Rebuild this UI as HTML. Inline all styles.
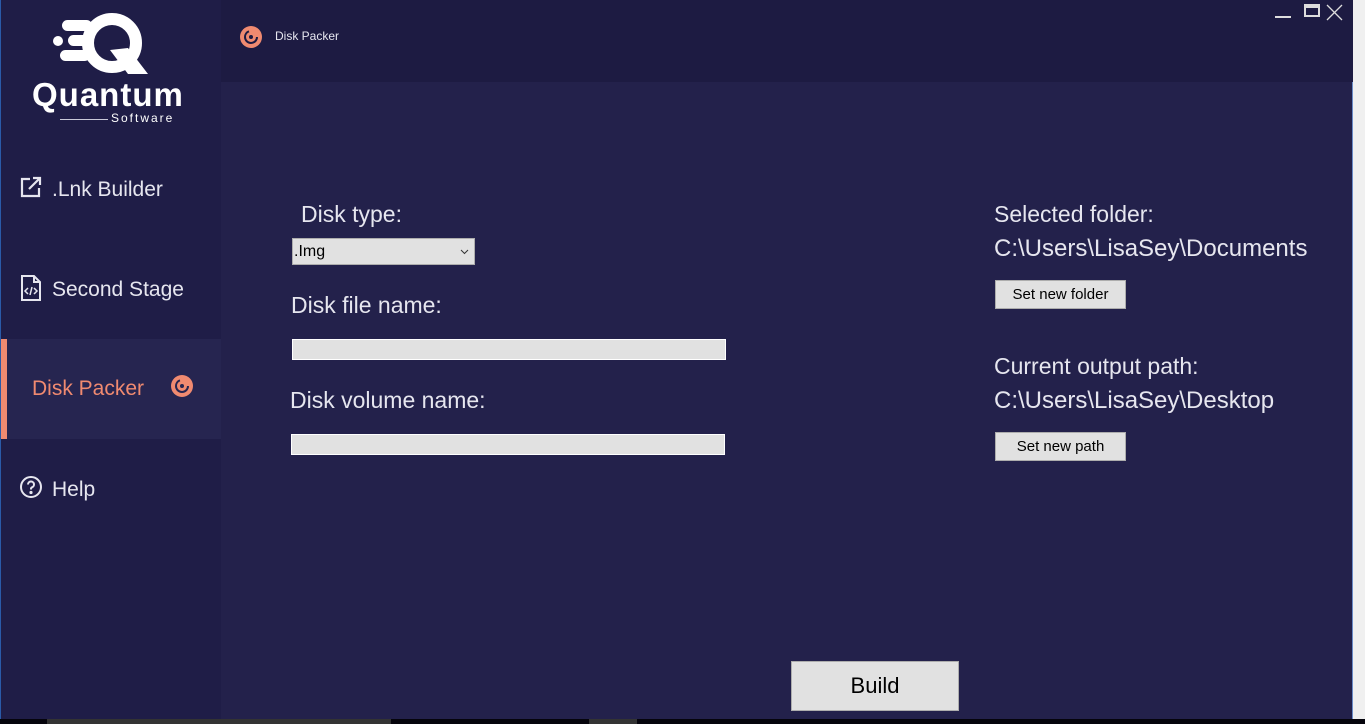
<!DOCTYPE html>
<html><head><style>
*{margin:0;padding:0;box-sizing:border-box}
body{width:1365px;height:724px;overflow:hidden;background:#f0f0f0;font-family:"Liberation Sans",Arial,sans-serif;position:relative}
#win{position:absolute;left:0;top:0;width:1353px;height:719px;background:#23214b;border-left:1px solid #2a5aa8;border-right:1px solid #6a8cc8}
#side{position:absolute;left:0;top:0;width:220px;height:719px;background:#1f1d47}
#hdr{position:absolute;left:220px;top:0;width:1132px;height:82px;background:#1d1b42}
.t{position:absolute;color:#e6e6ef;white-space:nowrap}
.nav{position:absolute;left:0;width:220px;height:100px;color:#e6e6ef;font-size:21px}
.nav span{position:absolute;left:51px;top:38px}
.box{position:absolute;background:#e1e1e1;border:1px solid #adadad}
.btn{position:absolute;background:#e1e1e1;border:1px solid #adadad;color:#000;font-size:15px;text-align:center}
#bottom{position:absolute;left:0;top:719px;width:1365px;height:5px;background:#05040c}
</style></head><body>
<div id="win">
<div id="side">
 <svg style="position:absolute;left:47px;top:10px" width="110" height="68" viewBox="0 0 110 68">
  <circle cx="10" cy="31" r="5" fill="#fff"/>
  <rect x="14" y="10" width="30" height="11" rx="5.5" fill="#fff"/>
  <rect x="20" y="25" width="22" height="11" rx="5.5" fill="#fff"/>
  <rect x="12" y="40" width="30" height="11" rx="5.5" fill="#fff"/>
  <circle cx="64" cy="33" r="24" fill="none" stroke="#fff" stroke-width="12"/>
  <path d="M62 40 L80 64 L100 64 L80 38 Z" fill="#fff"/>
 </svg>
 <div class="t" style="left:31px;top:76px;font-size:33px;font-weight:bold;color:#fff;letter-spacing:1px">Quantum</div>
 <div style="position:absolute;left:59px;top:119px;width:48px;height:1px;background:#c8c8d8"></div>
 <div class="t" style="left:110px;top:111px;font-size:12px;color:#fff;letter-spacing:2px">Software</div>
 <div class="nav" style="top:140px"><svg style="position:absolute;left:18px;top:35px" width="24" height="24" viewBox="0 0 24 24" fill="none" stroke="#e6e6ef" stroke-width="2.2"><path d="M11 4H3v17h17v-8"/><path d="M10 14L21 3M14 3h7v7"/></svg><span>.Lnk Builder</span></div>
 <div class="nav" style="top:240px"><svg style="position:absolute;left:19px;top:34px" width="22" height="28" viewBox="0 0 22 28" fill="none" stroke="#e6e6ef" stroke-width="2"><path d="M2 2h12l6 6v18H2z M14 2v6h6"/><path d="M8 14l-3 3 3 3M14 14l3 3-3 3M12 13l-2 8" stroke-width="1.5"/></svg><span>Second Stage</span></div>
 <div class="nav" style="top:339px;background:#262550;border-left:6px solid #f08a70"><span style="left:25px;color:#f08a70">Disk Packer</span><svg style="position:absolute;left:163px;top:35px" width="24" height="24" viewBox="0 0 24 24"><circle cx="12" cy="12" r="11" fill="#f08a70"/><circle cx="12" cy="12" r="6" fill="none" stroke="#262550" stroke-width="2" stroke-dasharray="26 12"/><circle cx="12" cy="12" r="2" fill="#262550"/></svg></div>
 <div class="nav" style="top:440px"><svg style="position:absolute;left:18px;top:35px" width="24" height="24" viewBox="0 0 24 24" fill="none" stroke="#e6e6ef" stroke-width="2"><circle cx="12" cy="12" r="10"/><path d="M9 9.5a3 3 0 1 1 4 2.8c-.8.4-1 1-1 1.7v.5"/><circle cx="12" cy="17.5" r="0.6" fill="#e6e6ef"/></svg><span>Help</span></div>
</div>
<div id="hdr">
 <svg style="position:absolute;left:18px;top:25px" width="24" height="24" viewBox="0 0 24 24"><circle cx="12" cy="12" r="11" fill="#f08a70"/><circle cx="12" cy="12" r="6" fill="none" stroke="#1d1b42" stroke-width="2" stroke-dasharray="26 12"/><circle cx="12" cy="12" r="2" fill="#1d1b42"/></svg>
 <div class="t" style="left:54px;top:29px;font-size:12px">Disk Packer</div>
 <div style="position:absolute;left:1054px;top:16px;width:16px;height:2px;background:#ddd"></div>
 <div style="position:absolute;left:1083px;top:4px;width:16px;height:13px;border:2px solid #ddd;border-top-width:4px"></div>
 <svg style="position:absolute;left:1105px;top:4px" width="17" height="17" viewBox="0 0 17 17" stroke="#ddd" stroke-width="1.3"><path d="M1 1L16 16M16 1L1 16"/></svg>
</div>
<div class="t" style="left:300px;top:201px;font-size:23px">Disk type:</div>
<div class="box" style="left:291px;top:238px;width:183px;height:27px"><span style="position:absolute;left:1px;top:4px;font-size:16px;color:#000">.Img</span><svg style="position:absolute;right:5px;top:10px" width="9" height="6" viewBox="0 0 9 6" fill="none" stroke="#333"><path d="M1 1l3.5 3.5L8 1"/></svg></div>
<div class="t" style="left:290px;top:292px;font-size:23px">Disk file name:</div>
<div class="box" style="left:291px;top:339px;width:434px;height:21px;border-color:#fff"></div>
<div class="t" style="left:289px;top:387px;font-size:23px">Disk volume name:</div>
<div class="box" style="left:290px;top:434px;width:434px;height:21px;border-color:#fff"></div>
<div class="t" style="left:993px;top:201px;font-size:23px">Selected folder:</div>
<div class="t" style="left:993px;top:235px;font-size:24px">C:\Users\LisaSey\Documents</div>
<div class="btn" style="left:994px;top:280px;width:131px;height:29px;line-height:27px">Set new folder</div>
<div class="t" style="left:993px;top:353px;font-size:23px">Current output path:</div>
<div class="t" style="left:993px;top:387px;font-size:24px">C:\Users\LisaSey\Desktop</div>
<div class="btn" style="left:994px;top:432px;width:131px;height:29px;line-height:27px">Set new path</div>
<div class="btn" style="left:790px;top:661px;width:168px;height:50px;line-height:48px;font-size:22px">Build</div>
</div>
<div id="bottom"><div style="position:absolute;left:47px;top:0;width:344px;height:5px;background:#333"></div><div style="position:absolute;left:589px;top:0;width:48px;height:5px;background:#333"></div></div>
</body></html>
